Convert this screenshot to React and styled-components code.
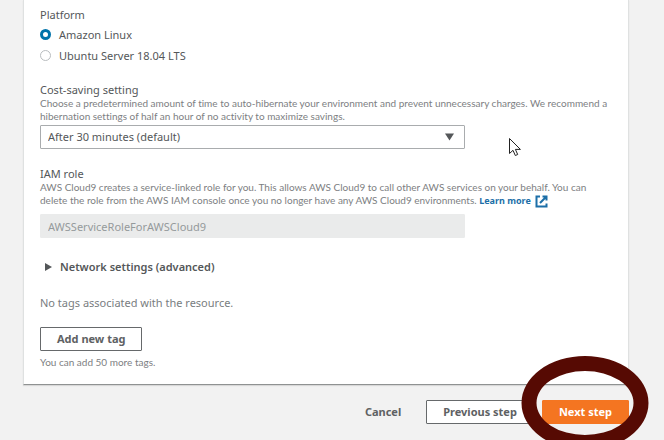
import React, { useState } from "react";
import styled, { createGlobalStyle, css } from "styled-components";

const GlobalStyle = createGlobalStyle`
  *, *::before, *::after { box-sizing: border-box; }
  body {
    margin: 0;
    background: #f2f2f2;
    color: #545759;
    font-family: "Noto Sans", "Open Sans", sans-serif;
    font-size: 11px;
    line-height: 16px;
  }
  button, input, select { font: inherit; color: inherit; margin: 0; }
`;

const Page = styled.div`
  position: relative;
  min-height: 100vh;
  padding: 0 35px 16px 23px;
  overflow: hidden;
`;

const Card = styled.main`
  display: flex;
  flex-direction: column;
  gap: 16px;
  padding: 7px 15px 15px 16px;
  background: #fff;
  border: solid #dfe1e1;
  border-width: 0 1px 1px;
  border-bottom-color: #8f9292;
  box-shadow: 0 1px 1px #d8d8d8;
`;

const RadioGroup = styled.fieldset`
  margin: 0;
  padding: 0;
  border: 0;
`;

const Legend = styled.legend`
  padding: 0;
  margin-bottom: 1px;
`;

const RadioRow = styled.label`
  display: flex;
  align-items: center;
  gap: 8px;
  height: 21px;
`;

const Radio = styled.input`
  appearance: none;
  width: 11px;
  height: 11px;
  border: 1px solid #b9bdbf;
  border-radius: 50%;
  background: #fff;
  &:checked { border: 3px solid #0073aa; }
`;

const Field = styled.div`
  display: flex;
  flex-direction: column;
`;

const Label = styled.label`
  line-height: 15px;
`;

const Help = styled.p`
  margin: 0;
  color: #7d8082;
  font-family: Lato, "Noto Sans", sans-serif;
  font-size: 10px;
  font-variant-ligatures: none;
  line-height: 13px;
`;

const controlBox = css`
  width: 100%;
  height: 24px;
  padding: 0 7px;
  border: 1px solid #a9acae;
  border-radius: 1px;
  background: #fff;
`;

const SelectWrap = styled.div`
  position: relative;
  max-width: 425px;
  margin: 2px 0 1px;
`;

const Select = styled.select`
  ${controlBox}
  display: block;
  appearance: none;
`;

const Caret = styled.svg`
  position: absolute;
  right: 11px;
  top: 8px;
  pointer-events: none;
`;

const TextInput = styled.input`
  ${controlBox}
  max-width: 425px;
  margin-top: 7px;
  border-color: #eaebeb;
  background: #eaebeb;
  color: #959a9b;
`;

const Link = styled.a`
  color: #1c6fa8;
  font-family: "Noto Sans", sans-serif;
  font-size: 9px;
  font-weight: 700;
  text-decoration: none;
  white-space: nowrap;
  svg { vertical-align: middle; margin: -2px 0 -2px 2px; }
`;

const Expander = styled.button`
  display: flex;
  align-items: center;
  gap: 8px;
  align-self: flex-start;
  margin: 5px 0 4px;
  padding: 0 5px;
  border: 0;
  background: none;
  font-weight: 600;
`;

const Muted = styled.p`
  margin: 0;
  color: #797d7f;
`;

const Button = styled.button`
  height: 24px;
  padding: 0 16px;
  border: 1px solid ${(p) => (p.$kind === "primary" ? "#f47521" : p.$kind === "link" ? "transparent" : "#66696b")};
  border-radius: 1px;
  background: ${(p) => (p.$kind === "primary" ? "#f47521" : p.$kind === "link" ? "transparent" : "#fff")};
  color: ${(p) => (p.$kind === "primary" ? "#fff" : "#5e6163")};
  font-weight: 700;
  line-height: 16px;
  white-space: nowrap;
`;

const Tags = styled.div`
  display: flex;
  flex-direction: column;
  align-items: flex-start;
  gap: 5px;
`;

const Footer = styled.footer`
  display: flex;
  justify-content: flex-end;
  gap: 8px;
  padding-top: 15px;
`;

const Highlighted = styled.div`
  position: relative;
`;

const Ring = styled.span`
  position: absolute;
  left: 50%;
  top: 50%;
  width: 127px;
  height: 94px;
  border: 15px solid #560a03;
  border-radius: 50%;
  transform: translate(-50%, -50%);
  margin-top: -9px;
  pointer-events: none;
`;

const Pointer = styled.svg`
  position: absolute;
  left: 508px;
  top: 137px;
  pointer-events: none;
`;

function ExternalIcon() {
  return (
    <svg width="13" height="13" viewBox="0 0 13 13" fill="none" stroke="currentColor" strokeWidth="2" aria-hidden="true">
      <path d="M5 1.5H1.5v10h10V8.5M7.5 1.5h4V5.5M11.2 1.8L5 8" />
    </svg>
  );
}

export default function App() {
  const [platform, setPlatform] = useState("amazon");
  const [open, setOpen] = useState(false);
  return (
    <>
      <GlobalStyle />
      <Page>
        <Card>
          <RadioGroup>
            <Legend>Platform</Legend>
            <RadioRow>
              <Radio type="radio" name="platform" checked={platform === "amazon"} onChange={() => setPlatform("amazon")} />
              Amazon Linux
            </RadioRow>
            <RadioRow>
              <Radio type="radio" name="platform" checked={platform === "ubuntu"} onChange={() => setPlatform("ubuntu")} />
              Ubuntu Server 18.04 LTS
            </RadioRow>
          </RadioGroup>
          <Field>
            <Label htmlFor="saving">Cost-saving setting</Label>
            <Help>
              Choose a predetermined amount of time to auto-hibernate your environment and prevent unnecessary
              charges. We recommend a hibernation settings of half an hour of no activity to maximize savings.
            </Help>
            <SelectWrap>
              <Select id="saving">
                <option>After 30 minutes (default)</option>
              </Select>
              <Caret width="9" height="8" viewBox="0 0 9 8" aria-hidden="true">
                <path d="M0 0.5h9L4.5 7.5z" fill="#545759" />
              </Caret>
            </SelectWrap>
          </Field>
          <Field>
            <Label htmlFor="role">IAM role</Label>
            <Help>
              AWS Cloud9 creates a service-linked role for you. This allows AWS Cloud9 to call other AWS services
              on your behalf. You can delete the role from the AWS IAM console once you no longer have any AWS
              Cloud9 environments.{" "}
              <Link href="#learn-more">
                Learn more <ExternalIcon />
              </Link>
            </Help>
            <TextInput id="role" disabled value="AWSServiceRoleForAWSCloud9" readOnly />
          </Field>
          <Expander type="button" aria-expanded={open} onClick={() => setOpen(!open)}>
            <svg width="7" height="8" viewBox="0 0 7 8" aria-hidden="true">
              <path d="M0 0l7 4-7 4z" fill="#545759" />
            </svg>
            Network settings (advanced)
          </Expander>
          <Muted>No tags associated with the resource.</Muted>
          <Tags>
            <Button type="button">Add new tag</Button>
            <Help>You can add 50 more tags.</Help>
          </Tags>
        </Card>
        <Footer>
          <Button type="button" $kind="link">Cancel</Button>
          <Button type="button">Previous step</Button>
          <Highlighted>
            <Button type="button" $kind="primary">Next step</Button>
            <Ring />
          </Highlighted>
        </Footer>
        <Pointer width="14" height="20" viewBox="0 0 14 20" aria-hidden="true">
          <path d="M1.5 1.5v15l3.5-3.2 2.3 5.2 2.4-1-2.3-5.1h5z" fill="#fff" stroke="#222" strokeWidth="1" />
        </Pointer>
      </Page>
    </>
  );
}
